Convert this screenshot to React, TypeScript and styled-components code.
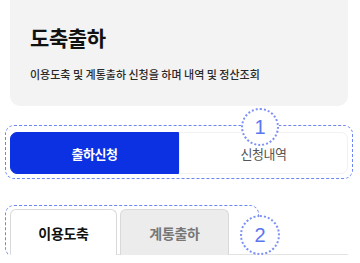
import React from 'react';
import styled, { createGlobalStyle } from 'styled-components';

const GlobalStyle = createGlobalStyle`
  body {
    margin: 0;
    background: #fff;
    font-family: "Noto Sans CJK KR", "Noto Sans", sans-serif;
  }
`;

const Page = styled.div`
  width: 338px;
  padding: 0 12px 0 10px;
`;

const HeaderCard = styled.div`
  height: 106px;
  box-sizing: border-box;
  padding: 22px 20px 0;
  background: #f3f3f3;
  border-radius: 0 0 10px 10px;
`;

const Title = styled.h1`
  margin: 0;
  font-size: 21px;
  font-weight: 700;
  color: #111;
  letter-spacing: -0.4px;
  line-height: 30px;
`;

const Subtitle = styled.p`
  margin: 14px 0 0;
  font-size: 11px;
  font-weight: 500;
  color: #2a2a2a;
  letter-spacing: 0;
  line-height: 16px;
`;

const Segment = styled.div`
  position: relative;
  display: flex;
  height: 42px;
  margin-top: 26px;
`;

const SegmentButton = styled.button<{ active?: boolean }>`
  flex: 1;
  border: 1px solid ${(p) => (p.active ? '#0b31e2' : '#f2f2f2')};
  background: ${(p) => (p.active ? '#0b31e2' : '#fff')};
  color: ${(p) => (p.active ? '#fff' : '#555')};
  font-family: inherit;
  font-size: 13px;
  font-weight: ${(p) => (p.active ? 700 : 400)};
  letter-spacing: -0.4px;
  border-radius: ${(p) => (p.active ? '7px 0 0 7px' : '0 7px 7px 0')};
  padding: 0;
`;

const TabsRow = styled.div`
  position: relative;
  display: flex;
  gap: 3px;
  height: 45px;
  margin-top: 35px;
  border-bottom: 1px solid #e3e3e3;
`;

const Tab = styled.button<{ active?: boolean; w: number }>`
  width: ${(p) => p.w}px;
  height: 46px;
  border: 1px solid #d9d9d9;
  border-bottom: none;
  border-radius: 6px 6px 0 0;
  background: ${(p) => (p.active ? '#fff' : '#ececec')};
  color: ${(p) => (p.active ? '#111' : '#777')};
  font-family: inherit;
  font-size: 14px;
  font-weight: 700;
  letter-spacing: -0.3px;
  padding: 0;
`;

const DashedFrame = styled.div<{ t: number; l: number; r?: number; w?: number; b: number }>`
  position: absolute;
  top: ${(p) => p.t}px;
  left: ${(p) => p.l}px;
  ${(p) => (p.w !== undefined ? `width: ${p.w}px;` : `right: ${p.r}px;`)}
  bottom: ${(p) => p.b}px;
  border: 1.5px dashed #6e86f2;
  border-radius: 9px;
  pointer-events: none;
`;

const Marker = styled.div<{ t: number; l: number; d: number }>`
  position: absolute;
  top: ${(p) => p.t}px;
  left: ${(p) => p.l}px;
  width: ${(p) => p.d}px;
  height: ${(p) => p.d}px;
  box-sizing: border-box;
  border: 2px dotted #7d92f4;
  border-radius: 50%;
  background: #fff;
  display: flex;
  align-items: center;
  justify-content: center;
  color: #5a76f0;
  font-family: "Liberation Sans", Arial, sans-serif;
  font-size: 20px;
  line-height: 1;
`;

export default function App() {
  return (
    <>
      <GlobalStyle />
      <Page>
        <HeaderCard>
          <Title>도축출하</Title>
          <Subtitle>이용도축 및 계통출하 신청을 하며 내역 및 정산조회</Subtitle>
        </HeaderCard>

        <Segment>
          <SegmentButton active>출하신청</SegmentButton>
          <SegmentButton>신청내역</SegmentButton>
          <DashedFrame t={-7} l={-5} r={-5} b={-5} />
          <Marker t={-24} l={231} d={38}>1</Marker>
        </Segment>

        <TabsRow>
          <Tab active w={107}>이용도축</Tab>
          <Tab w={109}>계통출하</Tab>
          <DashedFrame t={-4} l={-5} w={252} b={-3} />
          <Marker t={6} l={230} d={40}>2</Marker>
        </TabsRow>
      </Page>
    </>
  );
}
